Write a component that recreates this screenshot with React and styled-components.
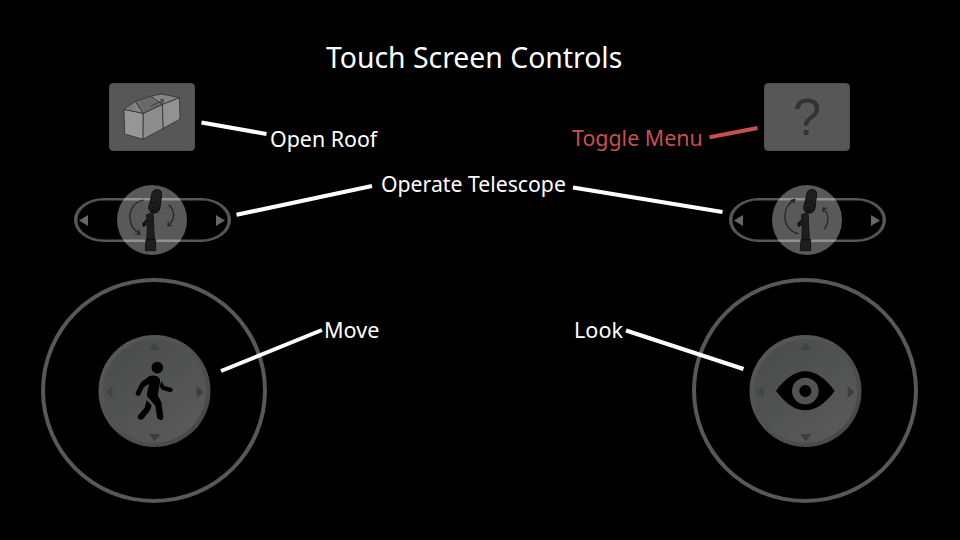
import React from "react";
import styled, { createGlobalStyle } from "styled-components";

const GlobalStyle = createGlobalStyle`
  * { box-sizing: border-box; }
  body { margin: 0; background: #000; }
`;

const Screen = styled.main`
  position: relative;
  width: 960px;
  height: 540px;
  padding: 0 42px 0 41px;
  overflow: hidden;
  background: #000;
  color: #fff;
  font-family: "Noto Sans", "Open Sans", sans-serif;
  display: grid;
  grid-template-columns: 226px 425px 226px;
`;

const Column = styled.section`
  display: flex;
  flex-direction: column;
  align-items: center;
  padding-top: 83px;
`;

const TileButton = styled.button`
  width: 86px;
  height: 68px;
  flex: none;
  margin: 0 ${(p) => p.$shiftRight || 0}px 0 ${(p) => p.$shiftLeft || 0}px;
  padding: 2px 0 0;
  border: 1px solid #4e4e4e;
  border-radius: 4px;
  background: #575757;
  color: #333;
  font: 51px/64px "Liberation Sans", Arial, sans-serif;
  display: flex;
  justify-content: center;
  align-items: center;
`;

const Slider = styled.div`
  width: 157px;
  height: 44px;
  flex: none;
  margin: 47px ${(p) => p.$shiftRight || 0}px 0 ${(p) => p.$shiftLeft || 0}px;
  padding: 1px 3px 0 2px;
  border: solid #585858;
  border-width: 2px 3px;
  box-shadow: inset 0 0 0 0.5px #585858;
  border-radius: 30px / 22px;
  display: flex;
  align-items: center;
  justify-content: space-between;
`;

const Knob = styled.div`
  width: 70px;
  height: 70px;
  flex: none;
  margin-top: -1px;
  border-radius: 50%;
  background: rgba(255, 255, 255, 0.35);
`;

const Icon = styled.svg`
  display: block;
  width: ${(p) => p.$w}px;
  height: ${(p) => p.$h}px;
  flex: none;
`;

const Joystick = styled.div`
  width: 226px;
  height: 225px;
  flex: none;
  margin-top: 36px;
  border: 4px solid #585858;
  border-radius: 50%;
  display: flex;
  align-items: center;
  justify-content: center;
`;

const Legend = styled.section`
  display: flex;
  flex-direction: column;
  align-items: stretch;
  padding-top: 37px;
`;

const Title = styled.h1`
  margin: 0 0 0 59px;
  font-size: 29px;
  line-height: 40px;
  font-weight: 400;
  white-space: nowrap;
  transform: scaleX(0.978);
  transform-origin: left;
`;

const LabelRow = styled.div`
  display: flex;
  justify-content: space-between;
  height: 32px;
  margin: ${(p) => p.$gap}px ${(p) => p.$right}px 0 ${(p) => p.$left}px;
`;

const Label = styled.span`
  font-size: 22.5px;
  line-height: 32px;
  white-space: nowrap;
  color: ${(p) => (p.$active ? "#c74f4f" : "#fff")};
  width: ${(p) => p.$w}px;
  margin-top: ${(p) => p.$lift || 0}px;
  transform: scaleX(${(p) => p.$stretch || 0.96});
  transform-origin: left;
`;

const Callouts = styled.svg`
  position: absolute;
  inset: 0;
  pointer-events: none;
`;

function House() {
  return (
    <Icon $w={84} $h={66} viewBox="31 30 252 198">
      <g transform="translate(1 0)">
        <g stroke="#303030" strokeWidth="2.4" strokeLinejoin="round">
          <path d="M72 103L130 115L129 193L74 177Z" fill="#969696" />
          <path d="M130 115L187 88L190 160L129 193Z" fill="#8d8d8d" />
          <path d="M187 88L238 68L240 132L190 160Z" fill="#929292" />
          <path d="M150 64L185 57L238 68L187 88Z" fill="#858585" />
          <path d="M72 103L106 79L130 115Z" fill="#858585" />
          <path d="M106 79L152 64L187 88L130 115Z" fill="#707070" />
        </g>
        <path d="M85 99L101 88M91 103L106 94M115 85L150 72M118 90L157 77M122 96L165 82M126 103L174 86M132 108L181 89M141 71L152 101M126 77L140 107M151 68L171 92" stroke="#575757" strokeWidth="1.5" fill="none" />
        <path d="M153 94Q172 81 188 79M180 75L190 73L188 86" stroke="#393939" strokeWidth="3" fill="none" />
      </g>
    </Icon>
  );
}

function Telescope({ up }) {
  return (
    <Icon $w={70} $h={70} viewBox="7 15 210 210">
      <g stroke="#0c0c0c" strokeWidth="2.5" fill="#1e1e1e" strokeLinejoin="round">
        <path d="M94 178H123V212H92Z" />
        <path d="M96 112Q92 103 102 102H113Q118 104 116 115L119 179H97L98 127Z" />
        <path d="M97 119L85 131L87 139L96 132" strokeWidth="4" />
        <path d="M113 36Q119 26 134 30Q143 34 141 44L136 84Q133 98 119 99Q102 96 103 79Z" />
        <circle cx="118" cy="83" r="16" />
        <path d="M105 104L115 87M113 103L120 89" strokeWidth="3" />
        <circle cx="117" cy="86" r="6" />
      </g>
      <g stroke="#222" strokeWidth="3.6" fill="none">
        {up ? (
          <>
            <path d="M87 161C60 157 43 132 46 105C47 83 59 69 73 61M62 62L75 58L73 70" />
            <path d="M163 147C180 127 178 102 162 88M171 86L160 84L160 96" />
          </>
        ) : (
          <>
            <path d="M87 60C58 66 44 88 46 116C48 140 60 153 74 160M62 162L76 163L72 150" />
            <path d="M162 75C181 91 182 113 164 134M161 125L160 137L171 136" />
          </>
        )}
      </g>
    </Icon>
  );
}

function Arrow({ left }) {
  return (
    <Icon $w={9} $h={11} viewBox="0 0 9 11">
      <path d={left ? "M9 0V11L0 5.5Z" : "M0 0V11L9 5.5Z"} fill="#666" />
    </Icon>
  );
}

function Thumb({ id, children }) {
  return (
    <Icon $w={113} $h={112} viewBox="23 30 339 336">
      <defs>
        <linearGradient id={`${id}-rim`} x1="0" y1="0" x2="1" y2="1">
          <stop offset="0.15" stopColor="#575757" />
          <stop offset="0.85" stopColor="#484949" />
        </linearGradient>
        <linearGradient id={`${id}-face`} x1="0.1" y1="0" x2="0.9" y2="1">
          <stop offset="0" stopColor="#4a4b4b" />
          <stop offset="1" stopColor="#5a5a5a" />
        </linearGradient>
      </defs>
      <circle cx="192.5" cy="198" r="168" fill={`url(#${id}-rim)`} />
      <circle cx="192.5" cy="198" r="155" fill={`url(#${id}-face)`} />
      <g fill="#3d3d3d">
        <path d="M176 75H210L193 54Z" opacity="0.7" />
        <path d="M176 327H210L193 349Z" />
        <path d="M66 184V219L46 202Z" opacity="0.65" />
        <path d="M319 184V219L340 202Z" />
      </g>
      {children}
    </Icon>
  );
}

function Walker() {
  return (
    <g>
      <circle cx="201" cy="128" r="17.5" />
      <path d="M176 154Q187 149 200 154Q211 160 209 172L202 211L213 232L219 275Q219 285 210 285Q202 285 200 277L195 242L174 218Q168 212 170 203L177 176L160 187L150 209Q145 215 138 211Q134 207 137 201L148 179Q150 174 157 168Z" />
      <path d="M213 168L222 183L242 188Q249 191 247 197Q245 202 238 201L217 195Q212 192 208 184Z" />
      <path d="M169 226L184 241L179 256L159 281Q152 287 145 282Q139 276 145 269L163 248Z" />
    </g>
  );
}

function Eye() {
  return (
    <g transform="translate(-3 0)">
      <path d="M107 197Q151 139 195 139Q240 139 283 198Q240 256 195 256Q150 256 107 197Z" />
      <circle cx="195" cy="198" r="40" fill="#525252" />
      <circle cx="195" cy="198" r="18" />
    </g>
  );
}

function TelescopeSlider({ up, ...shift }) {
  return (
    <Slider {...shift}>
      <Arrow left />
      <Knob>
        <Telescope up={up} />
      </Knob>
      <Arrow />
    </Slider>
  );
}

export default function App() {
  return (
    <>
      <GlobalStyle />
      <Screen>
        <Column>
          <TileButton $shiftRight={4} aria-label="Open Roof">
            <House />
          </TileButton>
          <TelescopeSlider $shiftRight={3} />
          <Joystick>
            <Thumb id="move">
              <Walker />
            </Thumb>
          </Joystick>
        </Column>
        <Legend>
          <Title>Touch Screen Controls</Title>
          <LabelRow $gap={46} $left={3} $right={-12}>
            <Label $w={108} $stretch={0.95}>Open Roof</Label>
            <Label $w={132} $active $lift={-1} $stretch={0.95}>Toggle Menu</Label>
          </LabelRow>
          <LabelRow $gap={13} $left={114} $right={126}>
            <Label $w={186} $stretch={0.943}>Operate Telescope</Label>
          </LabelRow>
          <LabelRow $gap={114} $left={57} $right={68}>
            <Label $w={56}>Move</Label>
            <Label $w={50}>Look</Label>
          </LabelRow>
        </Legend>
        <Column>
          <TileButton $shiftLeft={4} aria-label="Toggle Menu">?</TileButton>
          <TelescopeSlider up $shiftLeft={4} />
          <Joystick>
            <Thumb id="look">
              <Eye />
            </Thumb>
          </Joystick>
        </Column>
        <Callouts width="960" height="540" stroke="#fff" strokeWidth="4">
          <path d="M201.5 122.5L266.5 134M236.5 214.8L372 186M573 187.5L722.5 212M221 371L322 330M626 330.5L743.5 369" />
          <path d="M709.5 137.3L757.5 128" stroke="#c74f4f" />
        </Callouts>
      </Screen>
    </>
  );
}
